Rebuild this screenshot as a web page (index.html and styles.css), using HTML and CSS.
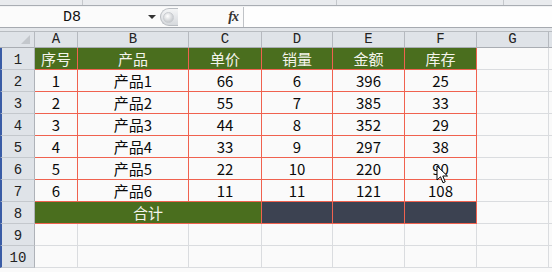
FILE: index.html
```html
<!DOCTYPE html>
<html lang="zh-CN">
<head>
    <meta charset="UTF-8">
    <title>合计</title>
    <link rel="stylesheet" href="styles.css">
</head>
<body>
    <div class="app">
        <div class="top-strip">
            <div class="strip-seg s1"></div>
            <div class="strip-seg s2"></div>
            <div class="strip-seg s3"></div>
            <div class="strip-seg s4"></div>
        </div>
        <div class="formula-bar">
            <div class="name-box">
                <span class="name-text">D8</span>
                <span class="name-arrow"></span>
            </div>
            <div class="grip"><span class="grip-dot"></span></div>
            <div class="fx-area"><span class="fx">fx</span></div>
            <div class="formula-input"></div>
        </div>
        <div class="bar-gap"></div>

        <table class="sheet">
            <colgroup>
                <col class="c-rh">
                <col class="c-a">
                <col class="c-b">
                <col class="c-c">
                <col class="c-d">
                <col class="c-e">
                <col class="c-f">
                <col class="c-g">
                <col class="c-h">
            </colgroup>
            <thead>
                <tr class="col-heads">
                    <th class="corner"><span class="corner-tri"></span></th>
                    <th>A</th><th>B</th><th>C</th><th>D</th><th>E</th><th>F</th><th>G</th><th class="cut"></th>
                </tr>
            </thead>
            <tbody>
                <tr>
                    <th class="rh">1</th>
                    <td class="hd">序号</td><td class="hd">产品</td><td class="hd">单价</td><td class="hd">销量</td><td class="hd">金额</td><td class="hd">库存</td>
                    <td></td><td class="cut"></td>
                </tr>
                <tr>
                    <th class="rh">2</th>
                    <td class="dc">1</td><td class="dc">产品1</td><td class="dc">66</td><td class="dc">6</td><td class="dc">396</td><td class="dc">25</td>
                    <td></td><td class="cut"></td>
                </tr>
                <tr>
                    <th class="rh">3</th>
                    <td class="dc">2</td><td class="dc">产品2</td><td class="dc">55</td><td class="dc">7</td><td class="dc">385</td><td class="dc">33</td>
                    <td></td><td class="cut"></td>
                </tr>
                <tr>
                    <th class="rh">4</th>
                    <td class="dc">3</td><td class="dc">产品3</td><td class="dc">44</td><td class="dc">8</td><td class="dc">352</td><td class="dc">29</td>
                    <td></td><td class="cut"></td>
                </tr>
                <tr>
                    <th class="rh">5</th>
                    <td class="dc">4</td><td class="dc">产品4</td><td class="dc">33</td><td class="dc">9</td><td class="dc">297</td><td class="dc">38</td>
                    <td></td><td class="cut"></td>
                </tr>
                <tr>
                    <th class="rh">6</th>
                    <td class="dc">5</td><td class="dc">产品5</td><td class="dc">22</td><td class="dc">10</td><td class="dc">220</td><td class="dc">90</td>
                    <td></td><td class="cut"></td>
                </tr>
                <tr>
                    <th class="rh">7</th>
                    <td class="dc">6</td><td class="dc">产品6</td><td class="dc">11</td><td class="dc">11</td><td class="dc">121</td><td class="dc">108</td>
                    <td></td><td class="cut"></td>
                </tr>
                <tr>
                    <th class="rh">8</th>
                    <td class="hd" colspan="3">合计</td><td class="dk"></td><td class="dk"></td><td class="dk"></td>
                    <td></td><td class="cut"></td>
                </tr>
                <tr>
                    <th class="rh">9</th>
                    <td></td><td></td><td></td><td></td><td></td><td></td><td></td><td class="cut"></td>
                </tr>
                <tr>
                    <th class="rh">10</th>
                    <td></td><td></td><td></td><td></td><td></td><td></td><td></td><td class="cut"></td>
                </tr>
            </tbody>
        </table>

        <svg class="pointer" width="13" height="20" viewBox="0 0 13 20">
            <path d="M1 1 L1 15 L4.5 11.8 L7 17.8 L9.2 16.8 L6.8 11 L11.5 11 Z" fill="#fff" stroke="#000" stroke-width="1" stroke-linejoin="round"/>
        </svg>
    </div>
</body>
</html>
```

FILE: styles.css
```css
body, html {
    margin: 0;
    padding: 0;
    width: 100%;
    height: 100%;
    overflow: hidden;
    background: #fafafa;
}
.app {
    position: relative;
    width: 552px;
    height: 272px;
    overflow: hidden;
    font-family: "Noto Sans CJK SC", "Liberation Sans", sans-serif;
}
.top-strip {
    display: flex;
    height: 5px;
    background: #e9ebee;
    border-bottom: 1px solid #a9adb3;
}
.strip-seg {
    border-right: 1px solid #c5c8cc;
}
.s1 { width: 82px; }
.s2 { width: 253px; }
.s3 { width: 166px; }
.s4 { flex: 1; border-right: none; }

.formula-bar {
    display: flex;
    height: 20px;
    background: #fbfbfb;
    border-top: 1px solid #f2f3f4;
    border-bottom: 1px solid #a6aab0;
}
.name-box {
    width: 160px;
    display: flex;
    align-items: center;
    position: relative;
}
.name-text {
    font-family: "Liberation Mono", monospace;
    font-size: 15px;
    margin-left: 63px;
    color: #111;
}
.name-arrow {
    position: absolute;
    left: 148px;
    top: 8px;
    width: 0;
    height: 0;
    border-left: 4px solid transparent;
    border-right: 4px solid transparent;
    border-top: 4px solid #333;
}
.grip {
    width: 15px;
    margin: 1px 0;
    border-radius: 9px 0 0 9px;
    background: linear-gradient(#f4f5f6, #d6d9dd);
    border: 1px solid #b9bdc2;
    border-right: none;
    display: flex;
    align-items: center;
    padding-left: 2px;
}
.grip-dot {
    width: 9px;
    height: 9px;
    border-radius: 50%;
    background: radial-gradient(circle at 40% 35%, #ffffff, #b5b9be);
    border: 1px solid #c9ccd0;
}
.fx-area {
    width: 60px;
    display: flex;
    align-items: center;
    justify-content: flex-end;
    padding-right: 5px;
    border-right: 1px solid #c0c3c7;
}
.fx {
    font-family: "Liberation Serif", serif;
    font-style: italic;
    font-weight: bold;
    font-size: 14px;
    color: #333;
    letter-spacing: -1px;
}
.formula-input {
    flex: 1;
    background: #fefefe;
}
.bar-gap {
    height: 3px;
    background: #e3e6ea;
}

.sheet {
    border-collapse: separate;
    border-spacing: 0;
    table-layout: fixed;
    width: 560px;
}
.c-rh { width: 35px; }
.c-a { width: 43px; }
.c-b { width: 111px; }
.c-c { width: 73px; }
.c-d { width: 71px; }
.c-e { width: 72px; }
.c-f { width: 72px; }
.c-g { width: 72px; }
.c-h { width: 11px; }

.sheet th, .sheet td {
    padding: 0;
    box-sizing: border-box;
    border-right: 1px solid #dadcdf;
    border-bottom: 1px solid #dadcdf;
    text-align: center;
    overflow: hidden;
    white-space: nowrap;
}
.col-heads th {
    height: 17px;
    background: #dfe3e8;
    border-top: 1px solid #b8bcc1;
    border-right: 1px solid #b5b9bf;
    border-bottom: 1px solid #a9adb3;
    font-family: "Liberation Mono", monospace;
    font-weight: normal;
    font-size: 14px;
    color: #222;
    line-height: 15px;
}
.corner {
    position: relative;
}
.corner-tri {
    position: absolute;
    right: 4px;
    bottom: 3px;
    width: 0;
    height: 0;
    border-left: 9px solid transparent;
    border-bottom: 9px solid #c3c7cc;
}
.sheet tbody tr {
    height: 22px;
}
.rh {
    background: #dfe3e8;
    border-left: 2px solid #3a5ca6;
    border-right: 1px solid #aeb2b8 !important;
    border-bottom: 1px solid #c4c8cd !important;
    font-family: "Liberation Mono", monospace;
    font-weight: normal;
    font-size: 14px;
    color: #222;
    padding-top: 3px !important;
}
.hd {
    background: #4a6e1e;
    color: #f4f4ec;
    font-size: 15px;
    border-right: 1px solid #f0624f !important;
    border-bottom: 1px solid #f0624f !important;
}
.dc {
    background: #fafafa;
    color: #0a0a0a;
    font-size: 15px;
    border-right: 1px solid #f0624f !important;
    border-bottom: 1px solid #f0624f !important;
}
.dk {
    background: #3c4251;
    border-right: 1px solid #f0624f !important;
    border-bottom: 1px solid #f0624f !important;
}
.cut {
    border-right: none !important;
}
.pointer {
    position: absolute;
    left: 436px;
    top: 165px;
}
```
